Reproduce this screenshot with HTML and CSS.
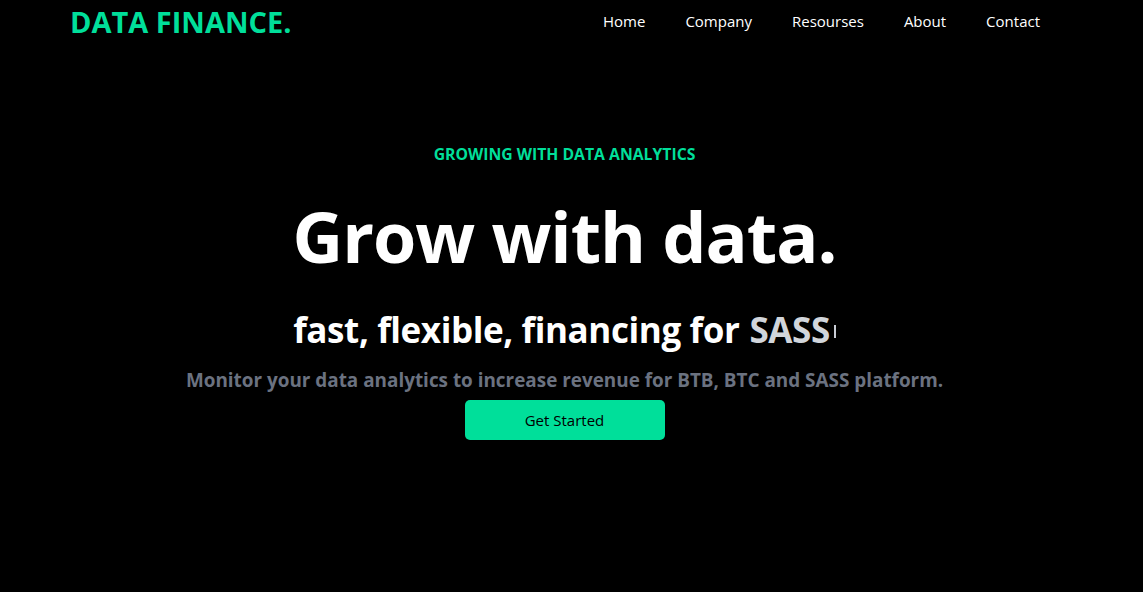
FILE: index.html
```html
<!DOCTYPE html>
<html lang="en">
<head>
<meta charset="utf-8">
<title>Data Finance</title>
<link rel="stylesheet" href="styles.css">
</head>
<body>
<header class="navbar">
  <h1 class="logo">DATA FINANCE.</h1>
  <ul class="nav-links">
    <li>Home</li>
    <li>Company</li>
    <li>Resourses</li>
    <li>About</li>
    <li>Contact</li>
  </ul>
</header>
<main class="hero">
  <p class="eyebrow">GROWING WITH DATA ANALYTICS</p>
  <h2 class="headline">Grow with data.</h2>
  <div class="typed-row">
    <p class="typed-lead">fast, flexible, financing for</p>
    <span class="typed">SASS</span><span class="cursor"></span>
  </div>
  <p class="desc">Monitor your data analytics to increase revenue for BTB, BTC and SASS platform.</p>
  <button class="cta">Get Started</button>
</main>
</body>
</html>
```

FILE: styles.css
```css
* { box-sizing: border-box; }
html, body {
  margin: 0;
  padding: 0;
  background: #000;
  color: #fff;
  font-family: "Open Sans", "Noto Sans", sans-serif;
}
.navbar {
  height: 42px;
  display: flex;
  align-items: center;
  justify-content: space-between;
  padding: 0 103px 0 70px;
}
.logo {
  margin: 0;
  font-size: 29px;
  font-weight: 700;
  color: #00df9a;
}
.nav-links {
  list-style: none;
  display: flex;
  gap: 40px;
  margin: 0;
  padding: 0;
  font-size: 15px;
}
.hero {
  display: flex;
  flex-direction: column;
  align-items: center;
  text-align: center;
  padding: 101px 14px 0 0;
}
.eyebrow {
  margin: 0;
  color: #00df9a;
  font-weight: 700;
  font-size: 15.75px;
  line-height: 22px;
}
.headline {
  margin: 29px 0 0;
  font-size: 70px;
  font-weight: 700;
  line-height: 84px;
  letter-spacing: -1px;
}
.typed-row {
  display: flex;
  justify-content: center;
  margin-top: 27px;
  height: 50px;
}
.typed-lead, .typed {
  margin: 0;
  font-size: 35px;
  font-weight: 700;
  line-height: 50px;
  letter-spacing: -0.4px;
}
.typed {
  margin-left: 10px;
  color: #d1d5db;
}
.cursor {
  align-self: flex-start;
  width: 2px;
  height: 13px;
  background: #c8ccd4;
  margin: 20px 0 0 4px;
}
.desc {
  margin: 11px 0 0;
  color: #6b7280;
  font-weight: 700;
  font-size: 18.9px;
  line-height: 28px;
}
.cta {
  margin-top: 6px;
  width: 200px;
  height: 40px;
  border: none;
  border-radius: 5px;
  background: #00df9a;
  color: #000;
  font-family: inherit;
  font-size: 15px;
  font-weight: 500;
}
```
